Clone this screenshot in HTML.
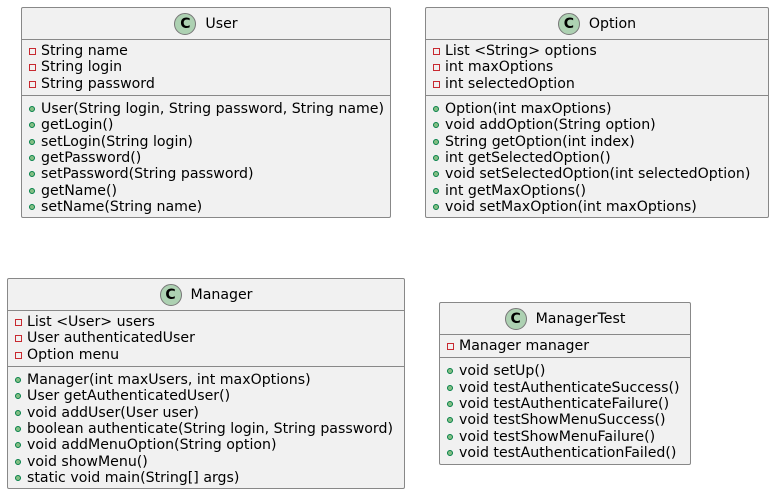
<!DOCTYPE html>
<html><head><meta charset="utf-8"><style>
body{margin:0;width:774px;height:494px;background:#fff;position:relative;overflow:hidden;font-family:"DejaVu Sans","Liberation Sans",sans-serif;font-size:14.15px;color:#000}
.box{position:absolute;background:#F1F1F1;border:1px solid #888;border-radius:2px;box-sizing:border-box}
.hd{height:32px;border-bottom:1px solid #888;display:flex;align-items:center;justify-content:center;box-sizing:border-box}
.ci{width:20px;height:20px;border-radius:50%;background:#ADD1B2;border:1px solid #777;display:flex;align-items:center;justify-content:center;font-weight:bold;font-size:14px;margin-right:9px}
.sec{padding:3px 0 3px 0;border-bottom:1px solid #888}
.sec+.sec{padding-top:5px}
.sec:last-child{border-bottom:none}
.ln{height:16.35px;line-height:16.35px;padding-left:19px;position:relative;white-space:nowrap}
.pr:before{content:"";position:absolute;left:7px;top:5px;width:5px;height:5px;border:1px solid #C82930}
.pu:before{content:"";position:absolute;left:7px;top:5px;width:6px;height:6px;border-radius:50%;background:#84BE84;border:0.5px solid #038048;box-sizing:border-box}
</style></head><body>

<div class="box" style="left:21px;top:7px;width:370px;height:211px">
<div class="hd"><div class="ci">C</div>User</div>
<div class="sec"><div class="ln pr">String name</div><div class="ln pr">String login</div><div class="ln pr">String password</div></div>
<div class="sec"><div class="ln pu">User(String login, String password, String name)</div><div class="ln pu">getLogin()</div><div class="ln pu">setLogin(String login)</div><div class="ln pu">getPassword()</div><div class="ln pu">setPassword(String password)</div><div class="ln pu">getName()</div><div class="ln pu">setName(String name)</div></div>
</div>

<div class="box" style="left:425px;top:7px;width:344px;height:211px">
<div class="hd"><div class="ci">C</div>Option</div>
<div class="sec"><div class="ln pr">List &lt;String&gt; options</div><div class="ln pr">int maxOptions</div><div class="ln pr">int selectedOption</div></div>
<div class="sec"><div class="ln pu">Option(int maxOptions)</div><div class="ln pu">void addOption(String option)</div><div class="ln pu">String getOption(int index)</div><div class="ln pu">int getSelectedOption()</div><div class="ln pu">void setSelectedOption(int selectedOption)</div><div class="ln pu">int getMaxOptions()</div><div class="ln pu">void setMaxOption(int maxOptions)</div></div>
</div>

<div class="box" style="left:7px;top:278px;width:398px;height:211px">
<div class="hd"><div class="ci">C</div>Manager</div>
<div class="sec"><div class="ln pr">List &lt;User&gt; users</div><div class="ln pr">User authenticatedUser</div><div class="ln pr">Option menu</div></div>
<div class="sec"><div class="ln pu">Manager(int maxUsers, int maxOptions)</div><div class="ln pu">User getAuthenticatedUser()</div><div class="ln pu">void addUser(User user)</div><div class="ln pu">boolean authenticate(String login, String password)</div><div class="ln pu">void addMenuOption(String option)</div><div class="ln pu">void showMenu()</div><div class="ln pu">static void main(String[] args)</div></div>
</div>

<div class="box" style="left:439px;top:302px;width:252px;height:163px">
<div class="hd"><div class="ci">C</div>ManagerTest</div>
<div class="sec"><div class="ln pr">Manager manager</div></div>
<div class="sec"><div class="ln pu">void setUp()</div><div class="ln pu">void testAuthenticateSuccess()</div><div class="ln pu">void testAuthenticateFailure()</div><div class="ln pu">void testShowMenuSuccess()</div><div class="ln pu">void testShowMenuFailure()</div><div class="ln pu">void testAuthenticationFailed()</div></div>
</div>

</body></html>
